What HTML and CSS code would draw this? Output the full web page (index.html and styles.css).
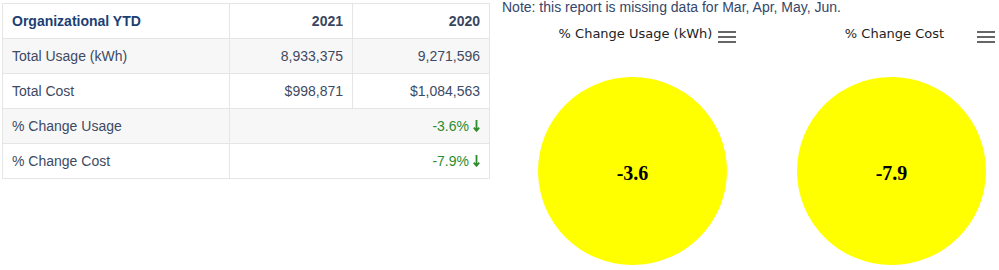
FILE: index.html
```html
<!DOCTYPE html>
<html>
<head>
<meta charset="utf-8">
<link rel="stylesheet" href="styles.css">
</head>
<body>
<div class="page">
  <table class="ytd">
    <tr class="head">
      <th class="label">Organizational YTD</th>
      <th class="num">2021</th>
      <th class="num">2020</th>
    </tr>
    <tr class="alt">
      <td class="label">Total Usage (kWh)</td>
      <td class="num">8,933,375</td>
      <td class="num">9,271,596</td>
    </tr>
    <tr>
      <td class="label">Total Cost</td>
      <td class="num">$998,871</td>
      <td class="num">$1,084,563</td>
    </tr>
    <tr class="alt">
      <td class="label">% Change Usage</td>
      <td class="num change" colspan="2">-3.6%<svg class="arrow" width="7" height="12" viewBox="0 0 7 12"><path d="M3.5 0V10.5M0.8 7.6L3.5 10.8L6.2 7.6" fill="none" stroke="#2e8b2e" stroke-width="1.8"/></svg></td>
    </tr>
    <tr>
      <td class="label">% Change Cost</td>
      <td class="num change" colspan="2">-7.9%<svg class="arrow" width="7" height="12" viewBox="0 0 7 12"><path d="M3.5 0V10.5M0.8 7.6L3.5 10.8L6.2 7.6" fill="none" stroke="#2e8b2e" stroke-width="1.8"/></svg></td>
    </tr>
  </table>
  <div class="side">
    <div class="note">Note: this report is missing data for Mar, Apr, May, Jun.</div>
    <div class="charts">
      <div class="chart">
        <div class="title">% Change Usage (kWh)</div>
        <div class="menu"><span></span><span></span><span></span></div>
        <div class="bubble">-3.6</div>
      </div>
      <div class="chart">
        <div class="title">% Change Cost</div>
        <div class="menu"><span></span><span></span><span></span></div>
        <div class="bubble">-7.9</div>
      </div>
    </div>
  </div>
</div>
</body>
</html>
```
FILE: styles.css
```css
html, body {
  margin: 0;
  padding: 0;
  overflow: hidden;
  background: #fff;
}
.page {
  display: flex;
  align-items: flex-start;
}
.ytd {
  margin: 3px 0 0 2px;
  border-collapse: collapse;
  font-family: "Liberation Sans", Arial, sans-serif;
  font-size: 14px;
  color: #3d4a63;
}
.ytd th, .ytd td {
  border: 1px solid #e5e5e5;
  height: 35px;
  padding: 0 9px;
  box-sizing: border-box;
  vertical-align: middle;
}
.ytd .label {
  width: 227px;
  text-align: left;
}
.ytd th.num:nth-child(2) { width: 123px; }
.ytd th.num:nth-child(3) { width: 137px; }
.ytd .num {
  text-align: right;
}
.ytd .head th {
  font-weight: bold;
  color: #3a4660;
}
.ytd .head th.label {
  color: #1c3f74;
}
.ytd .alt td {
  background: #f7f7f7;
}
.ytd .change {
  color: #2e8b2e;
}
.arrow {
  margin-left: 4px;
  vertical-align: -1px;
}
.side {
  margin-left: 12px;
  flex: 1;
  min-width: 0;
  display: flex;
  flex-direction: column;
}
.note {
  font-family: "Liberation Sans", Arial, sans-serif;
  font-size: 14px;
  line-height: 15px;
  color: #34466a;
  white-space: nowrap;
}
.charts {
  display: grid;
  grid-template-columns: 259px 1fr;
}
.chart {
  position: relative;
  display: flex;
  flex-direction: column;
  align-items: flex-start;
  padding-left: 36px;
}
.title {
  margin-top: 11px;
  width: 189px;
  padding-left: 6px;
  box-sizing: border-box;
  text-align: center;
  font-family: "DejaVu Sans", Verdana, sans-serif;
  font-size: 13px;
  line-height: 15px;
  color: #222;
  white-space: nowrap;
}
.menu {
  position: absolute;
  left: 216px;
  top: 16px;
  width: 18px;
  display: flex;
  flex-direction: column;
  gap: 3px;
}
.menu span {
  display: block;
  height: 2px;
  background: #666;
}
.bubble {
  margin-top: 36px;
  width: 189px;
  height: 188px;
  border-radius: 50%;
  background: #ffff00;
  display: flex;
  align-items: center;
  justify-content: center;
  font-family: "Liberation Serif", "Times New Roman", serif;
  font-weight: bold;
  font-size: 20px;
  color: #000;
  padding-top: 4px;
  box-sizing: border-box;
}
```
